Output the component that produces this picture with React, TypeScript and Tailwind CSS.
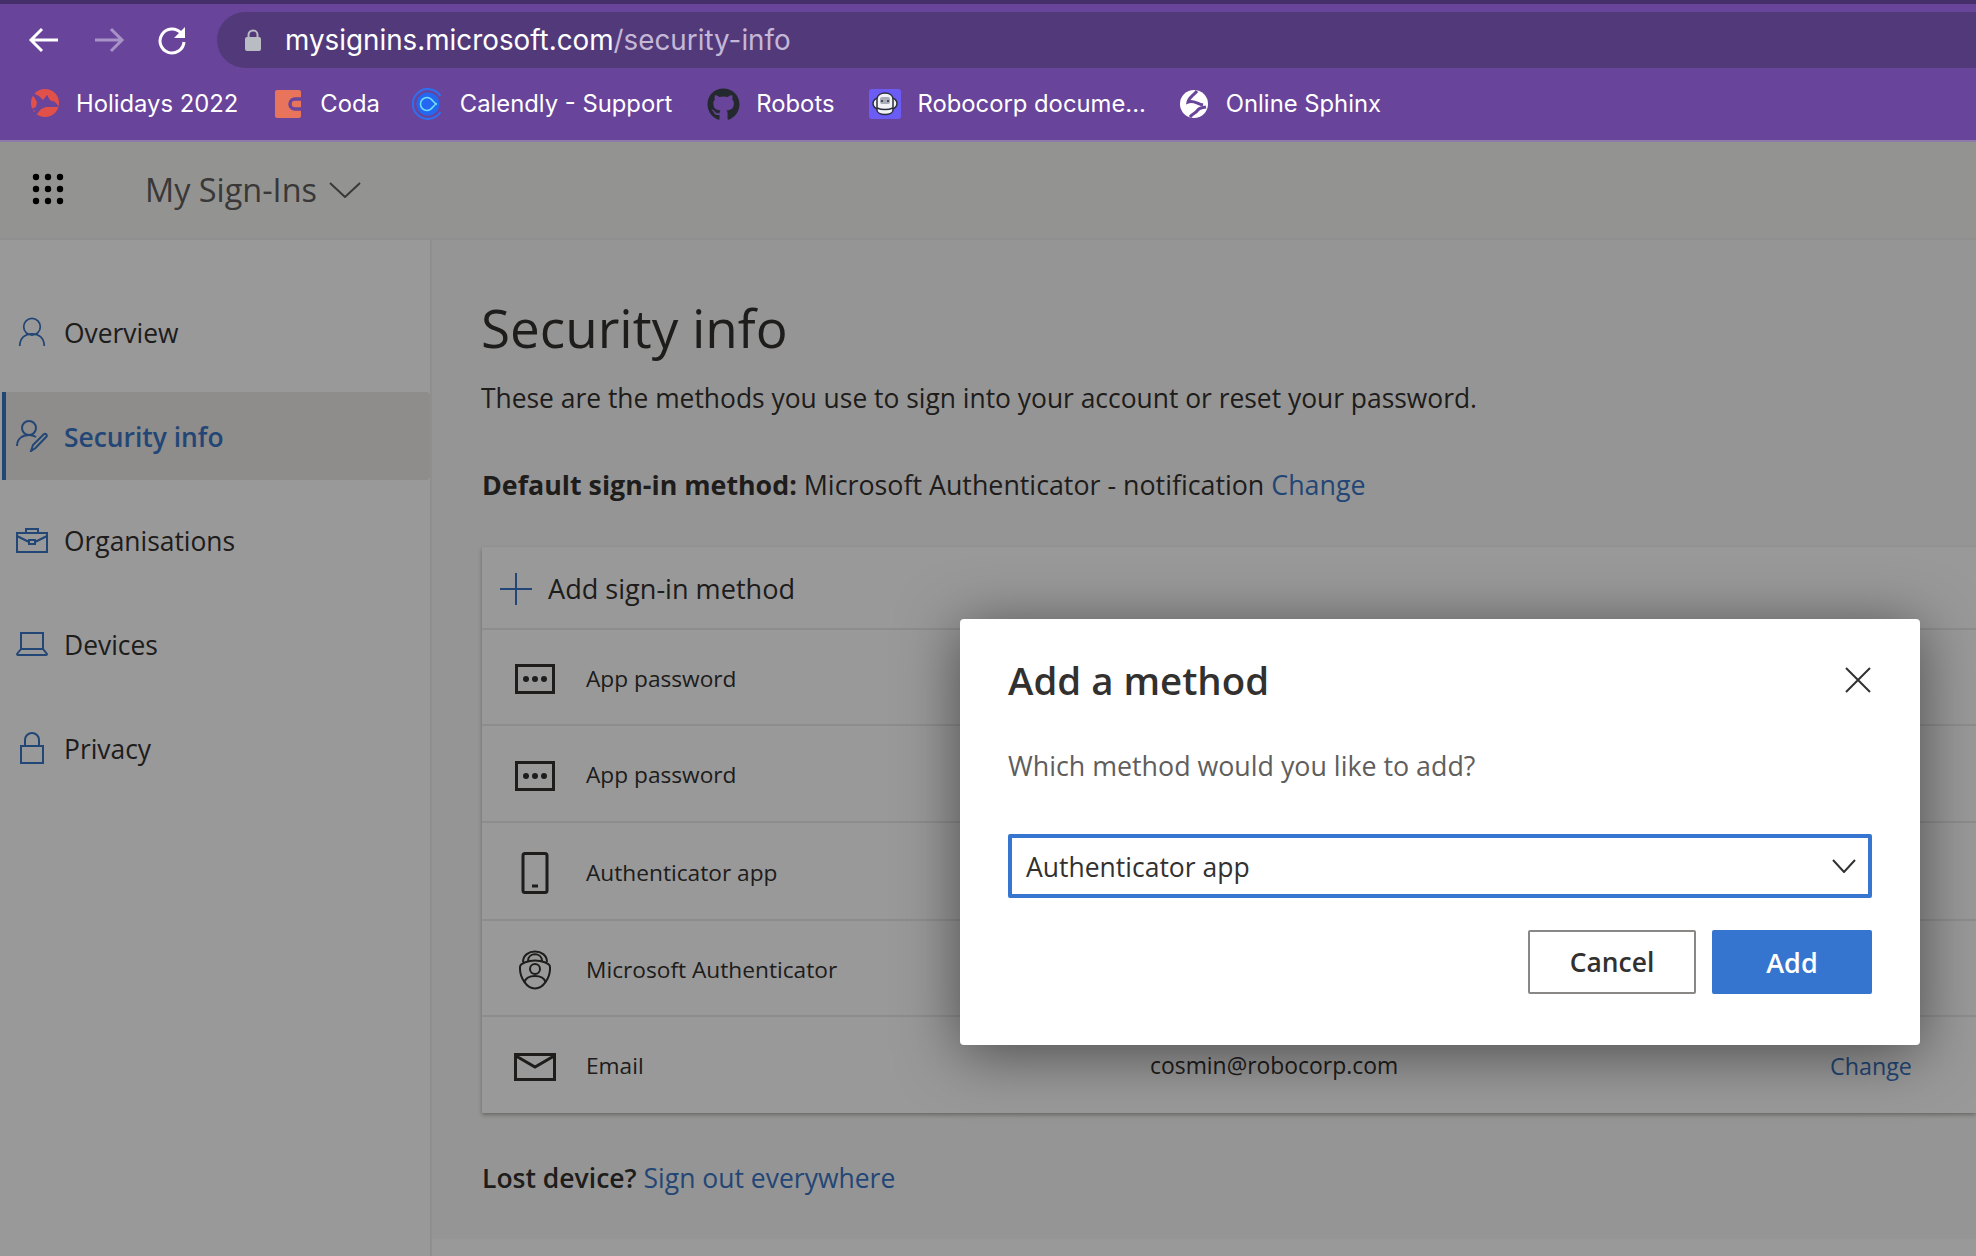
import { FaGithub } from "react-icons/fa";

const ui = "font-['Open_Sans','Noto_Sans',sans-serif]";

function HolidaysIcon() {
  return (
    <svg width="32" height="32" viewBox="0 0 32 32">
      <circle cx="17" cy="15" r="14" fill="#e2504a" />
      <path d="M3 4l8 4 4 4 4-5c2 3 3 6 5 6 3 0 5 3 7 6H18l-5 2-4 5-7 3 5-6-4-2 5-2 1-5z" fill="#68449a" />
    </svg>
  );
}

function CodaIcon() {
  return (
    <svg width="26" height="28" viewBox="0 0 26 28">
      <rect width="26" height="28" rx="2" fill="#e8745c" />
      <path d="M26 9h-6a5 5 0 0 0 0 10h6" fill="none" stroke="#68449a" strokeWidth="3.500" />
    </svg>
  );
}

function CalendlyIcon() {
  return (
    <svg width="32" height="32" viewBox="0 0 32 32" fill="none">
      <path d="M28.500 8A15 15 0 1 0 28.500 24" stroke="#2f6ff0" strokeWidth="2" />
      <circle cx="16" cy="16" r="11.500" fill="#2468f2" />
      <path d="M25 16C21 16 21 9.500 15 9.500A6.500 6.500 0 0 0 15 22.500C21 22.500 21 16 25 16" stroke="#6fe0f5" strokeWidth="1.500" />
    </svg>
  );
}

function RobotIcon() {
  return (
    <svg width="32" height="30" viewBox="0 0 32 30">
      <rect width="32" height="30" rx="3" fill="#6b5cf6" />
      <rect x="4" y="9" width="24" height="11" rx="5.500" fill="#f2f3f6" stroke="#2b2f3a" strokeWidth="1.500" />
      <path d="M8 10c0-8 16-8 16 0v11c0 6-16 6-16 0z" fill="#f2f3f6" stroke="#2b2f3a" strokeWidth="1.500" />
      <rect x="11" y="8" width="10" height="7" rx="2" fill="#a9adb8" />
      <path d="M13 11v2M19 11v2" stroke="#2b2f3a" strokeWidth="1.500" />
      <path d="M8 19c5 2 11 2 16 0" fill="none" stroke="#2b2f3a" strokeWidth="1.500" />
    </svg>
  );
}

function SphinxIcon() {
  return (
    <svg width="30" height="30" viewBox="0 0 30 30" fill="none">
      <circle cx="15" cy="15" r="14" fill="#fff" />
      <path d="M18 2C14 7 10 8 9 13c5-2 8 1 15 3" stroke="#68449a" strokeWidth="3" />
      <path d="M27 18c-4 1-7 0-9 4-1 2-4 2-7 6" stroke="#68449a" strokeWidth="3" />
    </svg>
  );
}

const bookmarks = [
  { icon: <HolidaysIcon />, label: "Holidays 2022", x: "w-[32px] mr-[16px]", ml: "ml-[28px]" },
  { icon: <CodaIcon />, label: "Coda", x: "w-[26px] mr-[19px]", ml: "ml-[37px]" },
  { icon: <CalendlyIcon />, label: "Calendly - Support", x: "w-[32px] mr-[16px]", ml: "ml-[32px]" },
  { icon: <FaGithub className="text-[33px] text-[#24292f]" />, label: "Robots", x: "w-[33px] mr-[16px]", ml: "ml-[35px]" },
  { icon: <RobotIcon />, label: "Robocorp docume...", x: "w-[32px] mr-[17px]", ml: "ml-[34px]" },
  { icon: <SphinxIcon />, label: "Online Sphinx", x: "w-[30px] mr-[17px]", ml: "ml-[33px]" },
];

function BrowserChrome() {
  return (
    <div className="h-[142px] shrink-0 bg-[#68449a] border-t-4 border-b-2 border-t-[#452f6b] border-b-[#8e7ba9] font-['Inter',sans-serif]">
      <div className="flex h-[72px] items-center pt-[8px] pb-[8px]">
        <svg className="ml-[28px] shrink-0" width="32" height="28" viewBox="0 0 32 28" fill="none" stroke="#fff" strokeWidth="3">
          <path d="M30 14H4M14 3L3 14l11 11" />
        </svg>
        <svg className="ml-[33px] shrink-0" width="32" height="28" viewBox="0 0 32 28" fill="none" stroke="#a893c8" strokeWidth="3">
          <path d="M2 14h26M18 3l11 11-11 11" />
        </svg>
        <svg className="ml-[32px] shrink-0" width="30" height="30" viewBox="0 0 30 30" fill="none">
          <path d="M24 8a12 12 0 1 0 3 9" stroke="#fff" strokeWidth="3" />
          <path d="M28 2v11H17z" fill="#fff" />
        </svg>
        <div className="ml-[30px] flex h-[56px] flex-1 items-center rounded-l-[28px] bg-[#52397a] pl-[28px]">
          <svg width="16" height="22" viewBox="0 0 16 22" fill="none">
            <rect x="0" y="8" width="16" height="14" rx="2" fill="#b9bcc2" />
            <path d="M3.5 9V6a4.5 4.5 0 0 1 9 0v3" stroke="#b9bcc2" strokeWidth="2" />
          </svg>
          <span className="ml-[24px] pt-[2px] text-[27.8px] leading-none text-white">
            mysignins.microsoft.com<span className="text-[#c4b8d6]">/security-info</span>
          </span>
        </div>
      </div>
      <div className="flex h-[56px] items-center">
        {bookmarks.map((b) => (
          <div key={b.label} className={"flex items-center " + b.ml}>
            <span className={"flex justify-center " + b.x}>{b.icon}</span>
            <span className="text-[23.8px] leading-none text-white">{b.label}</span>
          </div>
        ))}
      </div>
    </div>
  );
}

const navStroke = { fill: "none", stroke: "#3a75c4", strokeWidth: 2 };

const navItems = [
  {
    label: "Overview",
    icon: (
      <svg className="mx-[2px] shrink-0" width="28" height="32" viewBox="0 0 32 34" {...navStroke}>
        <circle cx="16" cy="11" r="9.5" />
        <path d="M2 33c0-9 6-14 14-14s14 5 14 14" />
      </svg>
    ),
  },
  {
    label: "Security info",
    active: true,
    icon: (
      <svg className="shrink-0" width="32" height="32" viewBox="0 0 32 32" {...navStroke}>
        <circle cx="13" cy="8" r="7" />
        <path d="M1 26c0-7 5-11 12-11 3 0 5 .7 7 2" />
        <path d="M15 31l2-6 11-11c1.500-1 3.500 1 2.500 2.500L19.500 28z" />
      </svg>
    ),
  },
  {
    label: "Organisations",
    icon: (
      <svg className="shrink-0" width="32" height="26" viewBox="0 0 32 26" {...navStroke}>
        <rect x="1" y="6" width="30" height="19" />
        <path d="M10 6V2h12v4M1 9l12 6M31 9l-12 6" />
        <rect x="13" y="13" width="6" height="4" />
      </svg>
    ),
  },
  {
    label: "Devices",
    icon: (
      <svg className="shrink-0" width="32" height="24" viewBox="0 0 32 24" {...navStroke}>
        <path d="M5 17V1h22v16" />
        <path d="M5 17L1 22c0 .500.500 1 1 1h28c.500 0 1-.500 1-1l-4-5z" />
      </svg>
    ),
  },
  {
    label: "Privacy",
    icon: (
      <svg className="shrink-0" width="32" height="32" viewBox="0 0 32 32" {...navStroke}>
        <rect x="5" y="14" width="22" height="17" />
        <path d="M9 14V8a7 7 0 0 1 14 0v6" />
      </svg>
    ),
  },
];

function Sidebar() {
  return (
    <aside className="flex w-[432px] shrink-0 flex-col border-r-2 border-[#eeeeee] pt-[48px] pl-[2px]">
      {navItems.map((item) => (
        <div
          key={item.label}
          className={
            "mb-[16px] flex h-[88px] items-center rounded-r-[4px] border-l-4 pl-[10px] " +
            (item.active ? "border-[#3a75c4] bg-[#edebe9]" : "border-transparent")
          }
        >
          {item.icon}
          <span
            className={
              "ml-[16px] pt-[2px] text-[26.4px] leading-none " +
              (item.active ? "font-semibold text-[#3a75c4]" : "text-[#323130]")
            }
          >
            {item.label}
          </span>
        </div>
      ))}
    </aside>
  );
}

const rowIcon = { fill: "none", stroke: "#323130", strokeWidth: 3 };

function DotsIcon() {
  return (
    <svg width="40" height="30" viewBox="0 0 40 30" {...rowIcon}>
      <rect x="1.500" y="1.500" width="37" height="27" />
      <circle cx="11" cy="15" r="3" fill="#323130" stroke="none" />
      <circle cx="20" cy="15" r="3" fill="#323130" stroke="none" />
      <circle cx="29" cy="15" r="3" fill="#323130" stroke="none" />
    </svg>
  );
}

const methods = [
  { id: "app-1", label: "App password", h: "h-[96px]", icon: <DotsIcon /> },
  { id: "app-2", label: "App password", h: "h-[97px]", icon: <DotsIcon /> },
  {
    id: "totp",
    label: "Authenticator app",
    h: "h-[98px]",
    icon: (
      <svg width="28" height="42" viewBox="0 0 28 42" {...rowIcon}>
        <rect x="2" y="1.500" width="24" height="39" rx="2" />
        <path d="M11 34h6" />
      </svg>
    ),
  },
  {
    id: "ms",
    label: "Microsoft Authenticator",
    h: "h-[96px]",
    icon: (
      <svg width="32" height="40" viewBox="0 0 32 40" fill="none" stroke="#323130" strokeWidth="2">
        <path d="M16 10.500C22 10.500 31 13 31 17C31.500 28 24 38.500 16 38.500C8 38.500 .5 28 1 17C1 13 10 10.500 16 10.500Z" />
        <path d="M4 12C4-2 28-2 28 12" />
        <path d="M9 11C9 2 23 2 23 11" />
        <circle cx="16" cy="19" r="5" />
        <path d="M5.500 32C8 24 24 24 26.500 32" />
      </svg>
    ),
  },
  {
    id: "email",
    label: "Email",
    h: "h-[98px] pb-[1px]",
    value: "cosmin@robocorp.com",
    action: "Change",
    icon: (
      <svg width="42" height="28" viewBox="0 0 42 28" {...rowIcon}>
        <rect x="1.500" y="1.500" width="39" height="25" />
        <path d="M2 3l19 11L40 3" />
      </svg>
    ),
  },
];

function MethodsCard() {
  return (
    <div className="ml-px mt-[44px] w-[1494px] bg-white shadow-[0_2px_4px_rgba(0,0,0,0.3)]">
      <div className="flex h-[81px] items-center pl-[18px] pt-[3px]">
        <svg width="32" height="32" viewBox="0 0 32 32" stroke="#3a75c4" strokeWidth="2">
          <path d="M16 0v32M0 16h32" />
        </svg>
        <span className="ml-[16px] text-[27.1px] leading-none text-[#323130]">Add sign-in method</span>
      </div>
      {methods.map((m) => (
        <div key={m.id} className={"flex items-center border-t-2 border-[#edebe9] pt-[4px] text-[#323130] " + m.h}>
          <span className="flex w-[104px] shrink-0 justify-center pl-[2px]">{m.icon}</span>
          <span className="w-[564px] shrink-0 text-[22.7px] leading-none">{m.label}</span>
          {m.value && <span className="w-[680px] shrink-0 text-[22.9px] leading-none">{m.value}</span>}
          {m.action && <span className="text-[23.3px] leading-none text-[#3a75c4]">{m.action}</span>}
        </div>
      ))}
    </div>
  );
}

function AddMethodDialog() {
  return (
    <div className="absolute left-[960px] top-[477px] flex h-[426px] w-[960px] flex-col rounded-[4px] bg-white px-[48px] shadow-[0_8px_60px_rgba(0,0,0,0.5)]">
      <div className="flex h-[120px] items-center justify-between pt-[2px]">
        <span className="text-[38.4px] font-semibold leading-none text-[#323130]">Add a method</span>
        <svg className="mr-px" width="26" height="26" viewBox="0 0 26 26" stroke="#323130" strokeWidth="2">
          <path d="M1 1l24 24M25 1L1 25" />
        </svg>
      </div>
      <div className="mt-[14px] h-[26px] text-[26.8px] leading-[26px] text-[#605e5c]">Which method would you like to add?</div>
      <div className="mt-[55px] flex h-[64px] items-center justify-between rounded-[2px] border-4 border-[#3776d0] pl-[14px] pr-[12px]">
        <span className="pt-[2px] text-[26.5px] leading-none text-[#323130]">Authenticator app</span>
        <svg width="24" height="14" viewBox="0 0 24 14" fill="none" stroke="#323130" strokeWidth="2">
          <path d="M1 1l11 12L23 1" />
        </svg>
      </div>
      <div className="mt-[32px] flex justify-end gap-[16px]">
        <button className="h-[64px] w-[168px] rounded-[2px] border-2 border-[#8a8886] bg-white pt-[2px] text-[26.4px] font-semibold text-[#323130]">
          Cancel
        </button>
        <button className="h-[64px] w-[160px] rounded-[2px] bg-[#3575cf] pt-[2px] text-[27px] font-semibold text-white">
          Add
        </button>
      </div>
    </div>
  );
}

export default function App() {
  return (
    <div className={"flex h-[1256px] w-[1976px] flex-col overflow-hidden bg-white " + ui}>
      <BrowserChrome />
      <div className="relative flex flex-1 flex-col overflow-hidden">
        {/* Header */}
        <div className="flex h-[98px] shrink-0 items-center bg-[#f5f5f3] border-b-2 border-[#eeeeee] pb-[2px]">
          <svg className="ml-[32px]" width="32" height="32" viewBox="0 0 32 32" fill="#000">
            {[4, 16, 28].map((y) =>
              [4, 16, 28].map((x) => <circle key={`${x}-${y}`} cx={x} cy={y} r="3.200" />),
            )}
          </svg>
          <span className="ml-[81px] text-[32.4px] leading-none text-[#605e5c]">My Sign-Ins</span>
          <svg className="ml-[12px] mt-[2px]" width="32" height="16" viewBox="0 0 32 16" fill="none" stroke="#605e5c" strokeWidth="2">
            <path d="M1 1l15 14L31 1" />
          </svg>
        </div>
        <div className="flex flex-1">
          <Sidebar />
          <main className="flex-1 bg-white">
            <div className="h-[999px] bg-[#faf9f8] pl-[49px] pt-[53px]">
              <h1 className="text-[53px] leading-[70px] text-[#323130]">Security info</h1>
              <p className="mt-[17px] text-[26.4px] leading-[36px] text-[#323130]">
                These are the methods you use to sign into your account or reset your password.
              </p>
              <p className="ml-px mt-[51px] text-[26.8px] leading-[36px] text-[#323130]">
                <span className="font-bold">Default sign-in method:</span> Microsoft Authenticator - notification{" "}
                <span className="text-[#3a75c4]">Change</span>
              </p>
              <MethodsCard />
              <p className="ml-px mt-[47px] text-[26.5px] leading-[36px] text-[#323130]">
                <span className="font-semibold">Lost device?</span> <span className="text-[#3a75c4]">Sign out everywhere</span>
              </p>
            </div>
          </main>
        </div>
        {/* Dimmed backdrop behind the dialog */}
        <div className="absolute inset-0 bg-black/40" />
        <AddMethodDialog />
      </div>
    </div>
  );
}
